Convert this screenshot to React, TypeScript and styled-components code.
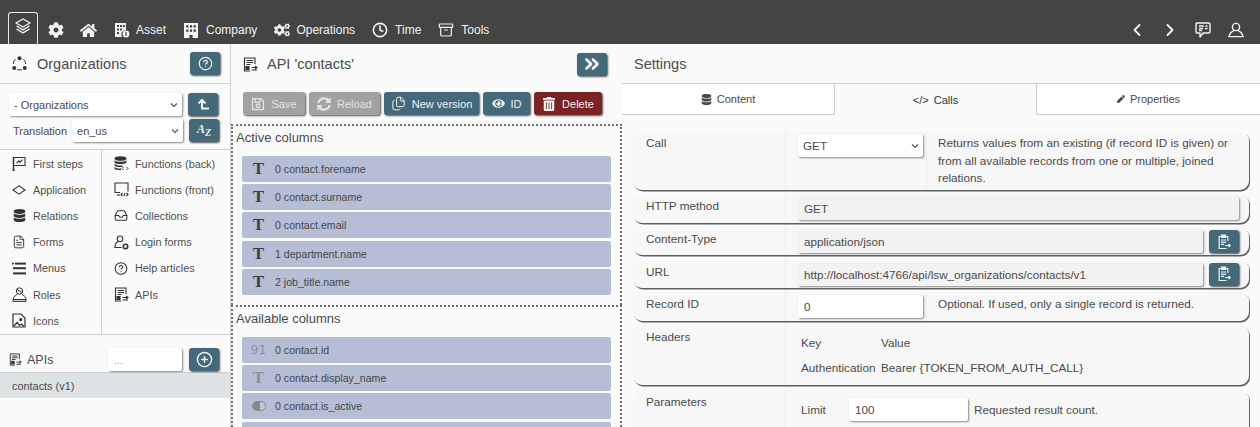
import React from 'react';
import styled, { createGlobalStyle } from 'styled-components';
import { FaCog, FaCogs, FaHome, FaDatabase, FaRegSave, FaSyncAlt, FaEye, FaTrashAlt, FaPen } from 'react-icons/fa';
import {
  Archive, ChevronLeft, ChevronRight, ChevronsRight, CircleHelp, CirclePlus, Clock, FileText, Files, Inbox,
} from 'lucide-react';

const chevron =
  "url(\"data:image/svg+xml,%3Csvg xmlns='http://www.w3.org/2000/svg' width='8' height='6'%3E%3Cpath d='M1 1.5 4 4.5 7 1.5' fill='none' stroke='%23555' stroke-width='1.2'/%3E%3C/svg%3E\")";

const GlobalStyle = createGlobalStyle`
  html, body { margin: 0; padding: 0; height: 100%; overflow: hidden; }
  body { background: #fafafa; color: #4a4a4a; font-family: "Liberation Sans", Arial, sans-serif; font-size: 11px; }
  * { box-sizing: border-box; }
`;

const Page = styled.div`
  width: 1260px;
  height: 427px;
  display: flex;
  flex-direction: column;
  overflow: hidden;
`;

/* ---------- header ---------- */
const Header = styled.header`
  height: 44px;
  flex: none;
  background: #444444;
  color: #f4f4f4;
  display: flex;
  align-items: flex-end;
  justify-content: space-between;
  padding: 0 8px 0 8px;
`;

const HeaderGroup = styled.div`
  display: flex;
  align-items: flex-end;
`;

const LogoTab = styled.div`
  width: 30px;
  height: 32px;
  border: 1px solid #e8e8e8;
  border-bottom: none;
  border-radius: 3px 3px 0 0;
  display: flex;
  justify-content: center;
  padding-top: 5px;
  margin-right: 10px;
`;

const HeaderItem = styled.div<{ $gap?: number; $ml?: number }>`
  height: 28px;
  display: flex;
  align-items: center;
  gap: ${(p) => p.$gap ?? 7}px;
  margin-left: ${(p) => p.$ml ?? 0}px;
  font-size: 12px;
  color: #f2f2f2;
`;

const RightItem = styled.div`
  width: 33px;
  height: 28px;
  display: flex;
  align-items: center;
  justify-content: center;
`;

/* ---------- panels ---------- */
const Body = styled.main`
  flex: 1;
  min-height: 0;
  display: flex;
`;

const Panel = styled.section<{ $width: number; $divider?: boolean }>`
  width: ${(p) => p.$width}px;
  flex: none;
  display: flex;
  flex-direction: column;
  border-right: ${(p) => (p.$divider ? '1px solid #cfcfcf' : 'none')};
`;

const PanelHead = styled.div<{ $noBorder?: boolean; $pr?: number }>`
  height: 40px;
  flex: none;
  display: flex;
  align-items: center;
  justify-content: space-between;
  padding: 0 ${(p) => p.$pr ?? 12}px 0 12px;
  border-bottom: ${(p) => (p.$noBorder ? 'none' : '1px solid #cfcfcf')};
`;

const PanelTitle = styled.div<{ $gap?: number }>`
  display: flex;
  align-items: center;
  gap: ${(p) => p.$gap ?? 8}px;
  font-size: 14.5px;
  color: #4a4a4a;
`;

const ActionButton = styled.button<{ $tone?: 'teal' | 'gray' | 'red'; $w?: number }>`
  height: 23px;
  width: ${(p) => (p.$w ? `${p.$w}px` : 'auto')};
  flex: none;
  padding: 0;
  border: none;
  border-radius: 3px;
  display: inline-flex;
  align-items: center;
  justify-content: center;
  gap: 6px;
  color: ${(p) => (p.$tone === 'gray' ? '#e4e4e4' : '#f2f2f2')};
  background: ${(p) => (p.$tone === 'gray' ? '#a2a2a2' : p.$tone === 'red' ? '#7b2224' : '#44697b')};
  box-shadow: 1px 1px 2px #555;
  font-family: inherit;
  font-size: 11px;
`;

const AzLabel = styled.i`
  font-family: "Liberation Serif", serif;
  font-size: 12px;
  font-weight: 700;
  & > sub { font-size: 10px; }
`;

/* ---------- left panel ---------- */
const FilterBlock = styled.div`
  height: 66px;
  flex: none;
  padding: 9px 12px 0 9px;
  display: flex;
  flex-direction: column;
  gap: 3px;
  border-bottom: 1px solid #cfcfcf;
`;

const FilterRow = styled.div`
  display: flex;
  align-items: center;
  gap: 6px;
`;

const TranslationLabel = styled.span`
  margin-left: 4px;
  margin-right: -1px;
  white-space: nowrap;
`;

const Select = styled.select<{ $w: number }>`
  width: ${(p) => p.$w}px;
  height: 23px;
  flex: none;
  appearance: none;
  border: none;
  border-radius: 2px;
  background: #fff ${chevron} no-repeat right 4px center;
  box-shadow: 1px 1px 2px #888;
  color: #4a4a4a;
  font-family: inherit;
  font-size: 11px;
  padding-left: 5px;
`;

const TextInput = styled.input<{ $w?: number; $readOnly?: boolean }>`
  width: ${(p) => (p.$w ? `${p.$w}px` : 'auto')};
  flex: ${(p) => (p.$w ? 'none' : 1)};
  min-width: 0;
  height: 23px;
  border: none;
  border-radius: 2px;
  padding: 0 6px;
  background: ${(p) => (p.$readOnly ? '#f2f2f2' : '#fff')};
  box-shadow: 1px 1px 2px #888;
  color: #4a4a4a;
  font-family: inherit;
  font-size: 11px;
  outline: none;
  &::placeholder { color: #999; }
`;

const NavGrid = styled.nav`
  height: 185px;
  flex: none;
  display: grid;
  grid-template-columns: 102px 1fr;
  border-bottom: 1px solid #cfcfcf;
`;

const NavColumn = styled.ul<{ $first?: boolean }>`
  list-style: none;
  margin: 0;
  padding: 0.5px 0 0 12px;
  border-right: ${(p) => (p.$first ? '1px solid #cfcfcf' : 'none')};
`;

const NavItem = styled.li`
  height: 26.2px;
  display: flex;
  align-items: center;
  gap: 7px;
  color: #4f4f4f;
  font-size: 10.85px;
  white-space: nowrap;
`;

const NavIcon = styled.span`
  width: 14px;
  height: 16px;
  display: flex;
  align-items: center;
  justify-content: center;
  flex: none;
  color: #333;
`;

const ListHead = styled.div`
  height: 38px;
  flex: none;
  display: flex;
  align-items: flex-start;
  gap: 7px;
  padding: 13px 11px 0 9px;
  font-size: 12.5px;
  border-bottom: 1px solid #cfcfcf;
`;

const ListTitle = styled.div`
  display: flex;
  align-items: center;
  gap: 5px;
  flex: 1;
  height: 23px;
`;

const ListRow = styled.div`
  height: 25px;
  flex: none;
  display: flex;
  align-items: center;
  padding-left: 12px;
  background: #dde2e5;
  font-size: 10.9px;
`;

/* ---------- middle panel ---------- */
const Toolbar = styled.div`
  height: 40px;
  flex: none;
  display: flex;
  align-items: flex-start;
  gap: 4px;
  padding: 8px 0 0 12px;
`;

const ColumnSection = styled.div<{ $h?: number }>`
  ${(p) => (p.$h ? `height: ${p.$h}px;` : 'flex: 1; min-height: 0;')}
  overflow: hidden;
  border: 2px dotted #6f6f6f;
  border-bottom: none;
  padding: 3px 9px 0 3px;
`;

const SectionTitle = styled.div`
  font-size: 13px;
  height: 26.6px;
  line-height: 17px;
`;

const ColumnList = styled.div`
  display: flex;
  flex-direction: column;
  gap: 2.4px;
  margin-left: 6px;
`;

const ColumnRow = styled.div`
  height: 26px;
  flex: none;
  display: flex;
  align-items: center;
  background: #b6bed5;
  border-radius: 2px;
  font-size: 10.6px;
  color: #464646;
`;

const ColumnType = styled.span<{ $muted?: boolean }>`
  width: 33px;
  font-family: "Liberation Serif", serif;
  font-weight: 700;
  font-size: 17px;
  color: ${(p) => (p.$muted ? '#8b8f9c' : '#3c3f48')};
  display: flex;
  justify-content: center;
`;

const NumberType = styled(ColumnType)`
  font-family: "DejaVu Sans", sans-serif;
  font-weight: 400;
  font-size: 12.5px;
`;

const Toggle = styled.span`
  width: 14px;
  height: 10px;
  border-radius: 5px;
  background: linear-gradient(90deg, #85888f 60%, #c4c8d4 60%);
  border: 1px solid #85888f;
`;

/* ---------- right panel ---------- */
const Tabs = styled.div`
  height: 31px;
  flex: none;
  display: grid;
  grid-template-columns: 212px 203px 1fr;
  border-bottom: 1px solid #cfcfcf;
`;

const Tab = styled.div<{ $active?: boolean }>`
  display: flex;
  align-items: center;
  justify-content: center;
  gap: 5px;
  font-size: 11px;
  color: ${(p) => (p.$active ? '#333' : '#4a4a4a')};
  background: ${(p) => (p.$active ? '#fafafa' : '#fff')};
  border-left: ${(p) => (p.$active ? '1px solid #cfcfcf' : 'none')};
  border-right: ${(p) => (p.$active ? '1px solid #cfcfcf' : 'none')};
  margin-bottom: ${(p) => (p.$active ? '-1px' : '0')};
`;

const Settings = styled.div`
  flex: 1;
  min-height: 0;
  overflow: hidden;
  padding: 16px 11px 0;
  display: flex;
  flex-direction: column;
  gap: 4.4px;
`;

const Card = styled.div<{ $h: number }>`
  height: ${(p) => p.$h}px;
  flex: none;
  display: grid;
  grid-template-columns: 153px 1fr;
  border-radius: 9px;
  background: #f7f7f7;
  box-shadow: 1px 1.5px 0 #5f5f5f;
  font-size: 11.75px;
`;

const CardLabel = styled.div`
  padding: 5px 13px;
  border-right: 1px solid #ececec;
  line-height: 13px;
`;

const CardValue = styled.div<{ $pt?: number }>`
  padding: ${(p) => p.$pt ?? 3}px 10px 0 12px;
  display: flex;
  align-items: flex-start;
  gap: 6px;
  min-width: 0;

  & select, & input { font-size: 11.7px; }
`;

const Hint = styled.div`
  margin-left: -3px;
  padding-left: 11px;
  border-left: 1px solid #ececec;
  line-height: 17.5px;
  align-self: stretch;
`;

const InlineHint = styled.span`
  line-height: 23px;
`;

const HeaderTable = styled.div`
  display: grid;
  grid-template-columns: 80px 1fr;
  row-gap: 12px;
  padding: 8px 0 0 3px;
`;

const LimitLabel = styled.span`
  width: 42px;
  margin-left: 3px;
  line-height: 23px;
`;

const Svg = styled.svg`
  display: block;
  flex: none;
`;

/* ---------- drawn icons ---------- */
const LayersIcon = () => (
  <Svg width="16" height="17" viewBox="0 0 16 17" fill="none" stroke="#f4f4f4" strokeWidth="1.4" strokeLinejoin="round">
    <path d="M8 1 15 5 8 9 1 5Z" />
    <path d="M1.5 8 8 11.8 14.5 8" />
    <path d="M1.5 11 8 14.8 14.5 11" />
  </Svg>
);

const AssetIcon = () => (
  <Svg width="16" height="16" viewBox="0 0 16 16" fill="#f4f4f4">
    <path d="M1 1h11v7.2A4.2 4.2 0 0 0 8.2 15H1Z" />
    <g fill="#444">
      <rect x="3" y="3" width="2" height="2" /><rect x="6" y="3" width="2" height="2" /><rect x="9" y="3" width="2" height="2" />
      <rect x="3" y="6.5" width="2" height="2" /><rect x="6" y="6.5" width="2" height="2" />
      <rect x="3" y="10" width="2" height="2" />
    </g>
    <circle cx="12" cy="12" r="3.4" />
    <rect x="11.4" y="10" width="1.2" height="4" fill="#444" />
  </Svg>
);

const CompanyIcon = () => (
  <Svg width="14" height="15" viewBox="0 0 14 15" fill="#f4f4f4">
    <path d="M0 0h14v15H8.6v-3H5.4v3H0Z" />
    <g fill="#444">
      <rect x="2.2" y="2.2" width="2.2" height="2.4" /><rect x="5.9" y="2.2" width="2.2" height="2.4" /><rect x="9.6" y="2.2" width="2.2" height="2.4" />
      <rect x="2.2" y="6.4" width="2.2" height="2.4" /><rect x="5.9" y="6.4" width="2.2" height="2.4" /><rect x="9.6" y="6.4" width="2.2" height="2.4" />
    </g>
  </Svg>
);

const CommentIcon = () => (
  <Svg width="16" height="17" viewBox="0 0 16 17" fill="none" stroke="#f4f4f4" strokeWidth="1.4" strokeLinejoin="round">
    <path d="M2 1h12a1 1 0 0 1 1 1v8a1 1 0 0 1-1 1H8l-3 4v-4H2a1 1 0 0 1-1-1V2a1 1 0 0 1 1-1Z" />
    <path d="M4 4h5M4 6.5h4M4 8.5h3M10.5 4h2M10 6.5h2.5" />
  </Svg>
);

const PersonIcon = () => (
  <Svg width="16" height="16" viewBox="0 0 16 16" fill="none" stroke="#f4f4f4" strokeWidth="1.4">
    <circle cx="8" cy="5" r="3.6" />
    <path d="M5.8 8.6C3.5 9.6 1.6 11 1 14.6h14c-.6-3.6-2.5-5-4.8-6" />
  </Svg>
);

const OrgIcon = () => (
  <Svg width="15" height="15" viewBox="0 0 15 15" fill="#333">
    <circle cx="7.5" cy="2.2" r="2" />
    <circle cx="2.2" cy="12" r="2" />
    <circle cx="12.8" cy="12" r="2" />
    <path d="M3.6 3.2A6.2 6.2 0 0 0 1.3 8M11.4 3.2A6.2 6.2 0 0 1 13.7 8M5 13.8h5" stroke="#333" fill="none" />
  </Svg>
);

const ApiIcon = ({ size = 15 }: { size?: number }) => (
  <Svg width={size} height={size} viewBox="0 0 15 15" fill="none" stroke="#333" strokeWidth="1.1">
    <path d="M12 7V1H1.5v13H7" />
    <path d="M3.5 3.5h6.5M3.5 5.5h6.5M3.5 7.5h4" />
    <path d="M3 9.5h3v3H3Z" fill="#333" />
    <path d="M8.5 10.5h5.5M12 9l2 1.5L12 12M14 13H8.5" />
  </Svg>
);

const FlagIcon = () => (
  <Svg width="14" height="15" viewBox="0 0 14 15" fill="none" stroke="#333" strokeWidth="1.1">
    <path d="M1.5 1v13M.5 14.2h2.2" strokeWidth="1.5" />
    <path d="M1.5 1.5h11.5v8H1.5" />
    <path d="M4.5 7 7 4.8l1 1.5L10.5 3.6" />
  </Svg>
);

const DiamondIcon = () => (
  <Svg width="14" height="10" viewBox="0 0 14 10" fill="none" stroke="#333" strokeWidth="1.1">
    <path d="M7 .8 13 5 7 9.2 1 5Z" />
  </Svg>
);

const MenuIcon = () => (
  <Svg width="14" height="13" viewBox="0 0 14 13" fill="#333">
    <path d="M0 .2 2.4 1.6 0 3Z" />
    <rect x="1" y="5.2" width="13" height="2" />
    <rect x="1" y="10.4" width="13" height="2" />
    <rect x="3" y="0.6" width="11" height="2" />
  </Svg>
);

const RoleIcon = () => (
  <Svg width="15" height="15" viewBox="0 0 15 15" fill="none" stroke="#333" strokeWidth="1">
    <circle cx="7.5" cy="4" r="3.2" />
    <path d="M5.5 6.5 4 8.5c-1.6.5-2.4 1.5-2.8 4H14c-.4-2.5-1.2-3.5-2.8-4L9.5 6.5" />
    <path d="M1 12.6h13v1.8H1ZM5 2.5l5 3" />
  </Svg>
);

const ImageIcon = () => (
  <Svg width="14" height="15" viewBox="0 0 14 15" fill="none" stroke="#333" strokeWidth="1.2">
    <path d="M1 1h8l4 4v9H1Z" />
    <path d="M2 13 5 9.5l2.5 3L9.5 11l2.5 2.5" />
    <circle cx="8.8" cy="6.6" r="1" fill="#333" />
  </Svg>
);

const FuncBackIcon = () => (
  <Svg width="15" height="16" viewBox="0 0 15 16" fill="#333">
    <ellipse cx="6.5" cy="2.5" rx="6" ry="2.3" />
    <path d="M.5 4.2c1.5 2 10.5 2 12 0v2.2c-1.5 2-10.5 2-12 0ZM.5 7.8c1.5 2 6 2 8 1.4v1.6c-2 .6-6.5.4-8-1.2ZM.5 11c1.5 1.6 5 1.8 6.5 1.6v1.6c-2 .2-5.5-.2-6.5-1.4Z" />
    <path d="M9.5 11 8 12.5 9.5 14M12.5 11l1.5 1.5-1.5 1.5" fill="none" stroke="#333" />
  </Svg>
);

const FuncFrontIcon = () => (
  <Svg width="15" height="15" viewBox="0 0 15 15" fill="none" stroke="#333" strokeWidth="1.1">
    <path d="M14 9.5V1H1v9.5h5" />
    <path d="M3 13h3" />
    <path d="M8.5 11 7 12.5 8.5 14M12.5 11l1.5 1.5-1.5 1.5M10 14l1-3" />
  </Svg>
);

const LoginIcon = () => (
  <Svg width="15" height="15" viewBox="0 0 15 15" fill="none" stroke="#333" strokeWidth="1.1">
    <circle cx="6" cy="3.8" r="2.8" />
    <path d="M4 6.4C2.3 7.4 1 9 .8 12.5h6.7" />
    <circle cx="11.5" cy="11.5" r="2.2" strokeWidth="1.6" />
  </Svg>
);

const UpIcon = () => (
  <Svg width="13" height="13" viewBox="0 0 13 13" fill="none" stroke="#f2f2f2" strokeWidth="2">
    <path d="M1.5 5.5 5 2l3.5 3.5M5 2v8.5h7" />
  </Svg>
);

const ClipboardIcon = () => (
  <Svg width="13" height="16" viewBox="0 0 13 16" fill="none" stroke="#f2f2f2" strokeWidth="1.2">
    <path d="M8.5 14.5H1.2V2.5h8.6V7" />
    <path d="M3.5 1.2h4v2.3h-4Z" fill="#f2f2f2" />
    <path d="M3 6h5M3 8.2h5M3 10.4h3M7 11.5h5M10.5 10l1.7 1.5L10.5 13" />
  </Svg>
);

/* ---------- data ---------- */
const navFirst: [React.ReactNode, string][] = [
  [<FlagIcon />, 'First steps'],
  [<DiamondIcon />, 'Application'],
  [<FaDatabase size={13} />, 'Relations'],
  [<FileText size={16} strokeWidth={1.6} />, 'Forms'],
  [<MenuIcon />, 'Menus'],
  [<RoleIcon />, 'Roles'],
  [<ImageIcon />, 'Icons'],
];

const navSecond: [React.ReactNode, string][] = [
  [<FuncBackIcon />, 'Functions (back)'],
  [<FuncFrontIcon />, 'Functions (front)'],
  [<Inbox size={15} strokeWidth={1.8} />, 'Collections'],
  [<LoginIcon />, 'Login forms'],
  [<CircleHelp size={15} strokeWidth={1.8} />, 'Help articles'],
  [<ApiIcon />, 'APIs'],
];

const activeColumns = ['0 contact.forename', '0 contact.surname', '0 contact.email', '1 department.name', '2 job_title.name'];

export default function App() {
  return (
    <Page>
      <GlobalStyle />
      <Header>
        <HeaderGroup>
          <LogoTab><LayersIcon /></LogoTab>
          <HeaderItem><FaCog size={16} /></HeaderItem>
          <HeaderItem $ml={16}><FaHome size={17} /></HeaderItem>
          <HeaderItem $ml={17} $gap={6}><AssetIcon />Asset</HeaderItem>
          <HeaderItem $ml={18} $gap={8}><CompanyIcon />Company</HeaderItem>
          <HeaderItem $ml={17} $gap={6}><FaCogs size={16} />Operations</HeaderItem>
          <HeaderItem $ml={17}><Clock size={16} strokeWidth={2.4} />Time</HeaderItem>
          <HeaderItem $ml={17}><Archive size={16} strokeWidth={1.8} />Tools</HeaderItem>
        </HeaderGroup>
        <HeaderGroup>
          <RightItem><ChevronLeft size={20} strokeWidth={2.2} /></RightItem>
          <RightItem><ChevronRight size={20} strokeWidth={2.2} /></RightItem>
          <RightItem><CommentIcon /></RightItem>
          <RightItem><PersonIcon /></RightItem>
        </HeaderGroup>
      </Header>

      <Body>
        <Panel $width={231} $divider>
          <PanelHead $pr={10}>
            <PanelTitle $gap={10}><OrgIcon />Organizations</PanelTitle>
            <ActionButton $w={30}><CircleHelp size={15} strokeWidth={2} /></ActionButton>
          </PanelHead>
          <FilterBlock>
            <FilterRow>
              <Select $w={173} defaultValue="org"><option value="org">- Organizations</option></Select>
              <ActionButton $w={30}><UpIcon /></ActionButton>
            </FilterRow>
            <FilterRow>
              <TranslationLabel>Translation</TranslationLabel>
              <Select $w={111} defaultValue="en_us"><option value="en_us">en_us</option></Select>
              <ActionButton $w={30}><AzLabel>A<sub>Z</sub></AzLabel></ActionButton>
            </FilterRow>
          </FilterBlock>
          <NavGrid>
            <NavColumn $first>
              {navFirst.map(([icon, label]) => (
                <NavItem key={label}><NavIcon>{icon}</NavIcon>{label}</NavItem>
              ))}
            </NavColumn>
            <NavColumn>
              {navSecond.map(([icon, label]) => (
                <NavItem key={label}><NavIcon>{icon}</NavIcon>{label}</NavItem>
              ))}
            </NavColumn>
          </NavGrid>
          <ListHead>
            <ListTitle><ApiIcon size={13} />APIs</ListTitle>
            <TextInput $w={74} placeholder="..." />
            <ActionButton $w={30}><CirclePlus size={17} strokeWidth={2} /></ActionButton>
          </ListHead>
          <ListRow>contacts (v1)</ListRow>
        </Panel>

        <Panel $width={391}>
          <PanelHead $noBorder $pr={15}>
            <PanelTitle $gap={9}><ApiIcon size={15} />API 'contacts'</PanelTitle>
            <ActionButton $w={30}><ChevronsRight size={22} strokeWidth={3} /></ActionButton>
          </PanelHead>
          <Toolbar>
            <ActionButton $tone="gray" $w={62}><FaRegSave size={14} />Save</ActionButton>
            <ActionButton $tone="gray" $w={71}><FaSyncAlt size={14} />Reload</ActionButton>
            <ActionButton $w={95}><Files size={15} strokeWidth={1.6} />New version</ActionButton>
            <ActionButton $w={47}><FaEye size={13} />ID</ActionButton>
            <ActionButton $tone="red" $w={68}><FaTrashAlt size={14} />Delete</ActionButton>
          </Toolbar>
          <ColumnSection $h={181}>
            <SectionTitle>Active columns</SectionTitle>
            <ColumnList>
              {activeColumns.map((name) => (
                <ColumnRow key={name}><ColumnType>T</ColumnType>{name}</ColumnRow>
              ))}
            </ColumnList>
          </ColumnSection>
          <ColumnSection>
            <SectionTitle>Available columns</SectionTitle>
            <ColumnList>
              <ColumnRow><NumberType $muted>91</NumberType>0 contact.id</ColumnRow>
              <ColumnRow><ColumnType $muted>T</ColumnType>0 contact.display_name</ColumnRow>
              <ColumnRow><ColumnType $muted><Toggle /></ColumnType>0 contact.is_active</ColumnRow>
              <ColumnRow />
            </ColumnList>
          </ColumnSection>
        </Panel>

        <Panel $width={638}>
          <PanelHead>
            <PanelTitle>Settings</PanelTitle>
          </PanelHead>
          <Tabs>
            <Tab><FaDatabase size={11} />Content</Tab>
            <Tab $active><span>{'</>'}</span><span>Calls</span></Tab>
            <Tab><FaPen size={8} />Properties</Tab>
          </Tabs>
          <Settings>
            <Card $h={59}>
              <CardLabel>Call</CardLabel>
              <CardValue>
                <Select $w={125} defaultValue="GET"><option value="GET">GET</option></Select>
                <Hint>
                  Returns values from an existing (if record ID is given) or<br />
                  from all available records from one or multiple, joined<br />
                  relations.
                </Hint>
              </CardValue>
            </Card>
            <Card $h={28.3}>
              <CardLabel>HTTP method</CardLabel>
              <CardValue><TextInput $readOnly readOnly defaultValue="GET" /></CardValue>
            </Card>
            <Card $h={28.3}>
              <CardLabel>Content-Type</CardLabel>
              <CardValue>
                <TextInput $readOnly readOnly defaultValue="application/json" />
                <ActionButton $w={30}><ClipboardIcon /></ActionButton>
              </CardValue>
            </Card>
            <Card $h={28.3}>
              <CardLabel>URL</CardLabel>
              <CardValue>
                <TextInput $readOnly readOnly defaultValue="http://localhost:4766/api/lsw_organizations/contacts/v1" />
                <ActionButton $w={30}><ClipboardIcon /></ActionButton>
              </CardValue>
            </Card>
            <Card $h={28.3}>
              <CardLabel>Record ID</CardLabel>
              <CardValue>
                <TextInput $w={125} defaultValue="0" />
                <Hint>Optional. If used, only a single record is returned.</Hint>
              </CardValue>
            </Card>
            <Card $h={60}>
              <CardLabel>Headers</CardLabel>
              <CardValue>
                <HeaderTable>
                  <span>Key</span><span>Value</span>
                  <span>Authentication</span><span>Bearer {'{TOKEN_FROM_AUTH_CALL}'}</span>
                </HeaderTable>
              </CardValue>
            </Card>
            <Card $h={60}>
              <CardLabel>Parameters</CardLabel>
              <CardValue $pt={8}>
                <LimitLabel>Limit</LimitLabel>
                <TextInput $w={119} defaultValue="100" />
                <InlineHint>Requested result count.</InlineHint>
              </CardValue>
            </Card>
          </Settings>
        </Panel>
      </Body>
    </Page>
  );
}
